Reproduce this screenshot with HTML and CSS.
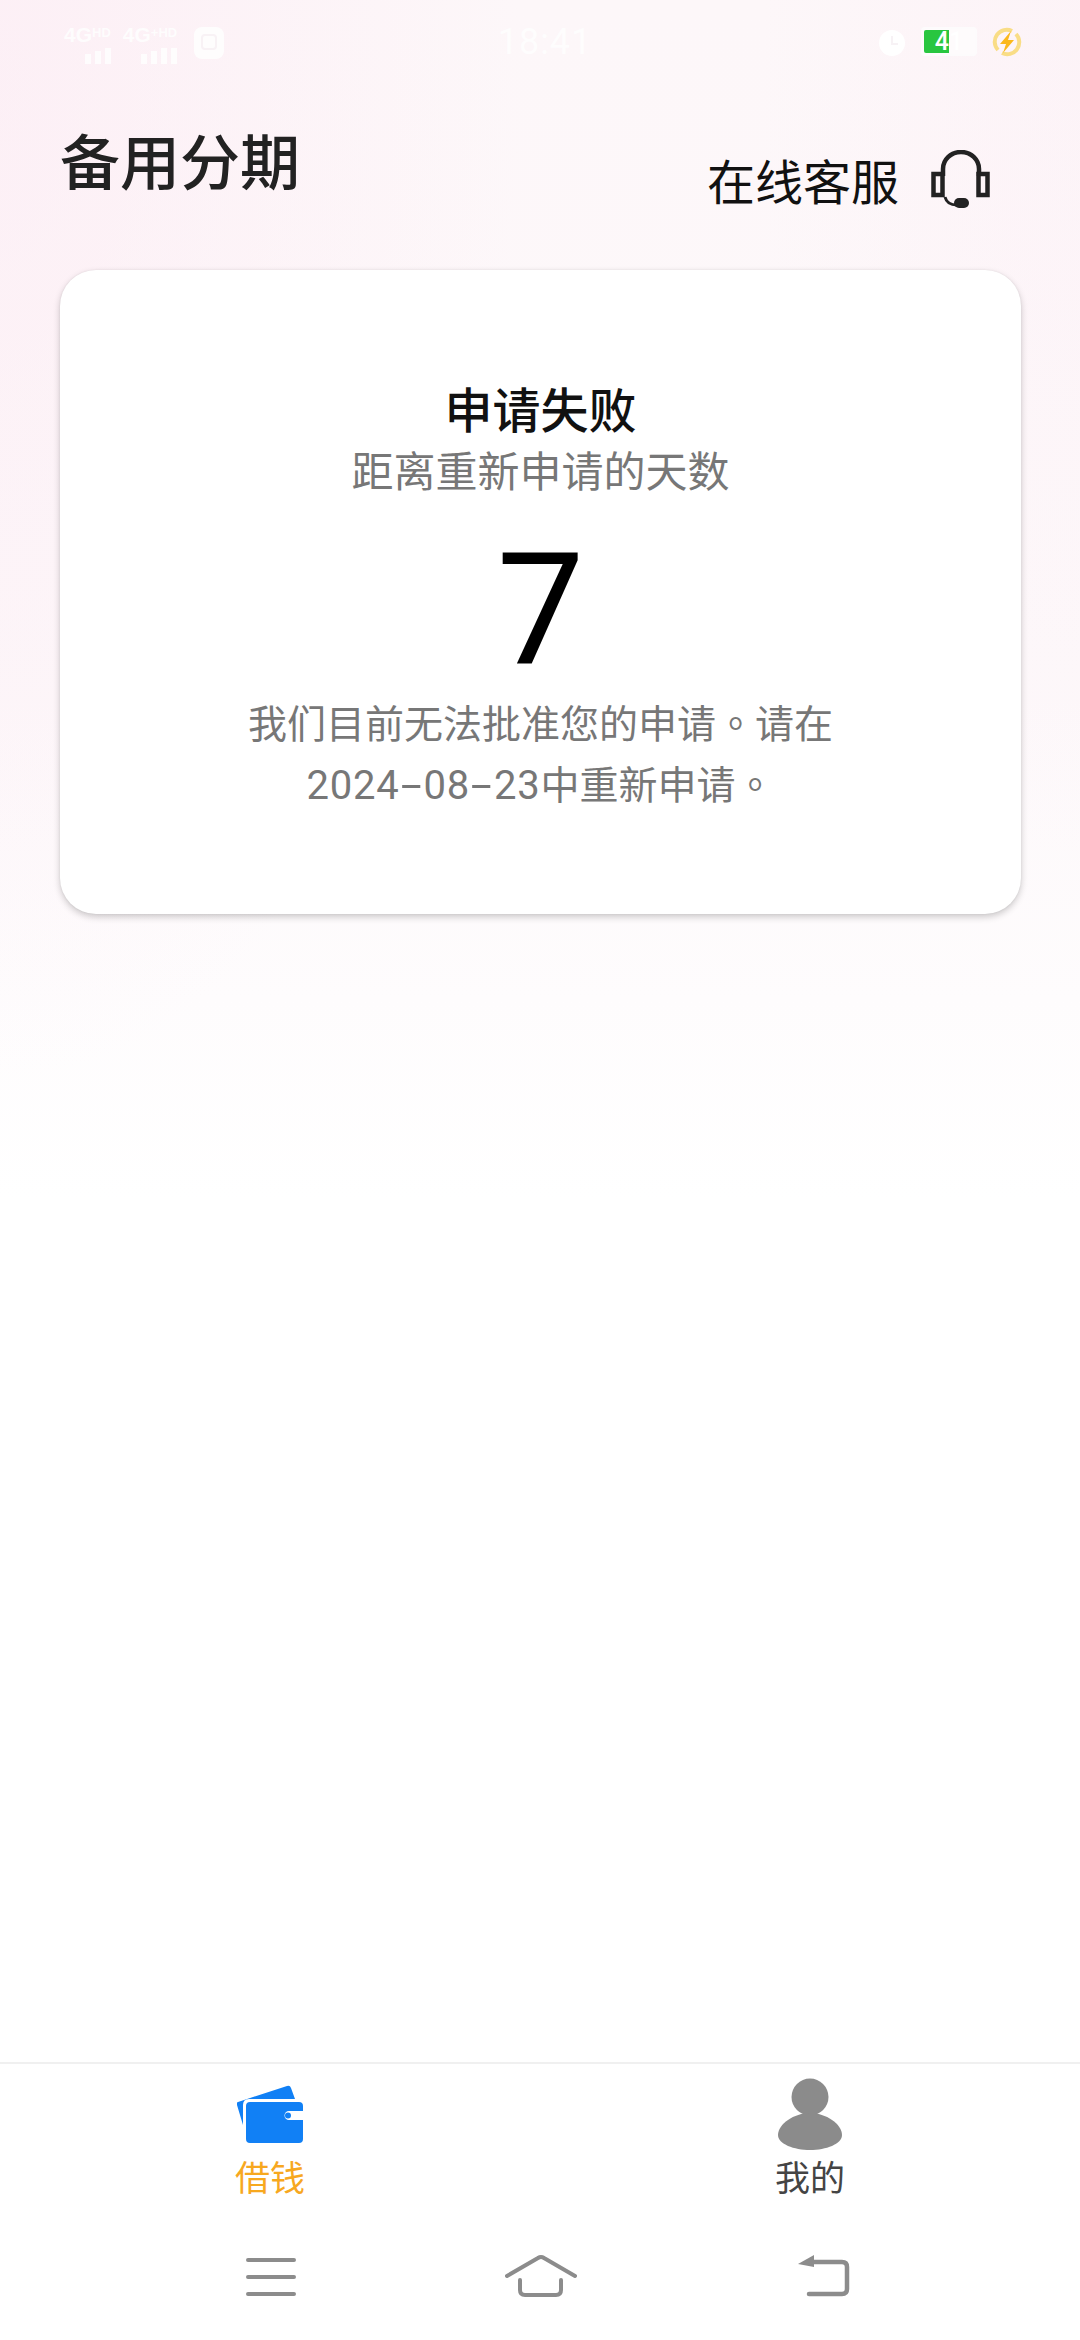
FILE: index.html
```html
<!DOCTYPE html>
<html>
<head>
    <title>备用分期</title>
    <meta name="viewport" content="width=device-width, initial-scale=1.0">
    <link rel="stylesheet" href="styles.css">
</head>
<body>
    <div class="page">
        <!-- status bar -->
        <div class="status">
            <div class="status-left">
                <div class="sim">
                    <div class="sim-label">4G<small>HD</small></div>
                    <div class="bars"><i></i><i></i><i></i></div>
                </div>
                <div class="sim">
                    <div class="sim-label">4G<small>+HD</small></div>
                    <div class="bars"><i></i><i></i><i></i><i></i></div>
                </div>
                <div class="app-dot"><span></span></div>
            </div>
            <div class="time">18:41</div>
            <div class="status-right">
                <svg class="alarm" width="28" height="28" viewBox="0 0 28 28">
                    <circle cx="14" cy="14" r="13" fill="#fff"/>
                    <path d="M14 7v8h6" fill="none" stroke="#f7f2f5" stroke-width="2"/>
                </svg>
                <div class="battery"><div class="battery-fill"></div><span>41</span></div>
                <svg class="charge" width="30" height="30" viewBox="0 0 30 30">
                    <path d="M6 23A12 12 0 0 1 20 4M24 7A12 12 0 0 1 10 26" fill="none" stroke="#f9dd86" stroke-width="4"/>
                    <path d="M19 4 8 17h6l-3 9 11-13h-6z" fill="#fbb81c"/>
                </svg>
            </div>
        </div>

        <!-- header -->
        <div class="header">
            <h1 class="title">备用分期</h1>
            <div class="service">
                <span>在线客服</span>
                <svg width="60" height="58" viewBox="0 0 60 58">
                    <path d="M12 26v-7a18 17 0 0 1 36 0v7" fill="none" stroke="#222" stroke-width="4.500"/>
                    <rect x="2.500" y="24" width="9" height="21" fill="none" stroke="#222" stroke-width="4.500"/>
                    <rect x="47.500" y="24" width="9" height="21" fill="none" stroke="#222" stroke-width="4.500"/>
                    <path d="M14 47q2 8 12 8" fill="none" stroke="#222" stroke-width="3"/>
                    <rect x="23" y="48" width="15" height="10" rx="5" fill="#222"/>
                </svg>
            </div>
        </div>

        <!-- card -->
        <div class="card">
            <div class="card-title">申请失败</div>
            <div class="card-sub">距离重新申请的天数</div>
            <div class="days">7</div>
            <div class="card-msg">我们目前无法批准您的申请<span class="stop">。</span>请在<br><span class="date">2024<span class="dash">-</span>08<span class="dash">-</span>23</span>中重新申请<span class="stop">。</span></div>
        </div>

        <!-- tabs -->
        <div class="tabs">
            <div class="tab tab-active">
                <svg width="66" height="72" viewBox="0 0 66 72">
                    <path d="M1 24 50 8q3-1 4 2l4 11H12q-6 0-6 6v20L0 27q-1-2 1-3z" fill="#1180f5"/>
                    <path d="M9 28q0-4 4-4h49q4 0 4 4v5H52a4.500 4.500 0 0 0 0 9h14v19q0 4-4 4H13q-4 0-4-4z" fill="#1180f5"/>
                    <circle cx="51" cy="37.500" r="3" fill="#1180f5"/>
                </svg>
                <span>借钱</span>
            </div>
            <div class="tab">
                <svg width="66" height="72" viewBox="0 0 66 72">
                    <circle cx="33" cy="19" r="18.500" fill="#8b8b8b"/>
                    <path d="M33 35c-16 0-32 11-32 22 0 9 16 15 32 15s32-6 32-15c0-11-16-22-32-22z" fill="#8b8b8b"/>
                </svg>
                <span>我的</span>
            </div>
        </div>

        <!-- system navigation -->
        <div class="sysnav">
            <svg width="50" height="46" viewBox="0 0 50 46">
                <path d="M2 6h46M2 23h46M2 40h46" stroke="#8c8c8c" stroke-width="4" stroke-linecap="round"/>
            </svg>
            <svg class="nav-home" width="72" height="46" viewBox="0 0 72 46">
                <path d="M2 22 33 4q3-2 6 0l31 18" fill="none" stroke="#8c8c8c" stroke-width="4" stroke-linecap="round"/>
                <path d="M15 26v10q0 5 5 5h31q5 0 5-5V26" fill="none" stroke="#8c8c8c" stroke-width="4" stroke-linecap="round"/>
            </svg>
            <svg class="nav-back" width="52" height="46" viewBox="0 0 52 46">
                <path d="M16 8h28q5 0 5 5v22q0 5-5 5H11" fill="none" stroke="#8c8c8c" stroke-width="4.500" stroke-linecap="round"/>
                <path d="M0 10 16 1v12z" fill="#8c8c8c"/>
            </svg>
        </div>
    </div>
</body>
</html>
```

FILE: styles.css
```css
* {
    box-sizing: border-box;
}
html, body {
    margin: 0;
    padding: 0;
}
body {
    font-family: "Noto Sans CJK SC", Roboto, sans-serif;
    background-color: #fff;
}
.page {
    width: 1080px;
    height: 2340px;
    display: flex;
    flex-direction: column;
    background:
        radial-gradient(ellipse 520px 1000px at 0 80px, rgba(252, 232, 242, 0.5), rgba(252, 232, 242, 0)),
        radial-gradient(ellipse 320px 800px at 1080px 60px, rgba(252, 236, 244, 0.35), rgba(252, 236, 244, 0)),
        linear-gradient(180deg, #fdf7f9 0, #fdf8fa 700px, #fefcfd 1000px, #fff 1200px);
    overflow: hidden;
}

/* status bar */
.status {
    height: 84px;
    padding: 24px 58px 0 64px;
    display: flex;
    justify-content: space-between;
    color: #fff;
}
.status-left, .status-right {
    width: 360px;
    display: flex;
    align-items: flex-start;
}
.status-left {
    opacity: 0.85;
}
.status-right {
    justify-content: flex-end;
    padding-top: 3px;
}
.sim {
    margin-right: 12px;
    font-family: "Liberation Sans", sans-serif;
    font-weight: 700;
}
.sim-label {
    font-size: 21px;
    line-height: 18px;
}
.sim-label small {
    font-size: 13px;
    vertical-align: 5px;
}
.bars {
    display: flex;
    justify-content: flex-end;
    align-items: flex-end;
    gap: 4px;
    height: 16px;
    margin-top: 4px;
}
.bars i {
    width: 6px;
    height: 10px;
    background-color: #fff;
}
.bars i:nth-child(2) {
    height: 13px;
}
.bars i:nth-child(n+3) {
    height: 16px;
}
.app-dot {
    width: 30px;
    height: 32px;
    margin: 3px 0 0 5px;
    padding: 7px;
    border-radius: 8px;
    background-color: #fff;
}
.app-dot span {
    display: block;
    height: 16px;
    border: 2px solid #f8f2f5;
    border-radius: 4px;
}
.time {
    margin: -3px 0 0 4px;
    font-family: Roboto, sans-serif;
    font-size: 36px;
    line-height: 42px;
    letter-spacing: 1px;
    opacity: 0.8;
}
.alarm {
    margin: 2px 15px 0 0;
}
.battery {
    position: relative;
    width: 56px;
    height: 29px;
    margin: 0 15px 0 0;
    border: 2px solid #fdfbfc;
    border-radius: 4px;
    background-color: rgba(255, 255, 255, 0.6);
    font-family: Roboto, sans-serif;
    font-size: 25px;
    font-weight: 500;
    line-height: 25px;
    text-align: center;
}
.battery-fill {
    position: absolute;
    left: 1px;
    top: 1px;
    width: 25px;
    height: 23px;
    border-radius: 2px 0 0 2px;
    background-color: #29c640;
}
.battery span {
    position: relative;
}

/* header */
.header {
    height: 186px;
    padding: 37px 60px 0;
    display: flex;
    justify-content: space-between;
    align-items: flex-start;
}
.title {
    margin: 0;
    font-size: 60px;
    line-height: 76px;
    font-weight: 500;
    color: #222;
}
.service {
    display: flex;
    align-items: center;
    gap: 32px;
    margin: 26px 29px 0 0;
    font-size: 48px;
    line-height: 64px;
    font-weight: 400;
    color: #111;
}

/* card */
.card {
    width: 961px;
    height: 644px;
    margin-left: 60px;
    padding-top: 109px;
    background-color: #fff;
    border-radius: 36px;
    box-shadow: 0 3px 7px rgba(0, 0, 0, 0.2), 0 0 2px rgba(0, 0, 0, 0.08);
    text-align: center;
}
.card-title {
    font-size: 48px;
    line-height: 56px;
    font-weight: 500;
    color: #111;
}
.card-sub {
    margin-top: 6px;
    font-size: 42px;
    line-height: 56px;
    color: #777;
}
.days {
    margin-top: 33px;
    font-family: Roboto, sans-serif;
    font-size: 156px;
    font-weight: 400;
    line-height: 160px;
    color: #000;
}
.card-msg {
    margin-top: 1px;
    font-size: 39px;
    line-height: 61px;
    color: #777;
}
.date {
    font-family: Roboto, sans-serif;
    font-size: 40px;
    letter-spacing: 0.8px;
}
.dash {
    display: inline-block;
    padding: 0 6px;
    transform: scaleX(1.9);
}
.stop {
    font-family: "Noto Sans CJK TC", sans-serif;
}

/* tabs */
.tabs {
    margin-top: auto;
    height: 166px;
    padding-top: 14px;
    border-top: 2px solid #f0f0f0;
    display: grid;
    grid-template-columns: 1fr 1fr;
}
.tab {
    display: flex;
    flex-direction: column;
    align-items: center;
    font-size: 35px;
    line-height: 44px;
    color: #444;
}
.tab span {
    margin-top: 4px;
}
.tab-active {
    color: #f7a81f;
}

/* system navigation */
.sysnav {
    height: 112px;
    padding: 26px 0 0 246px;
    display: flex;
    align-items: flex-start;
}
.nav-home {
    margin-left: 209px;
}
.nav-back {
    margin-left: 221px;
}
```
